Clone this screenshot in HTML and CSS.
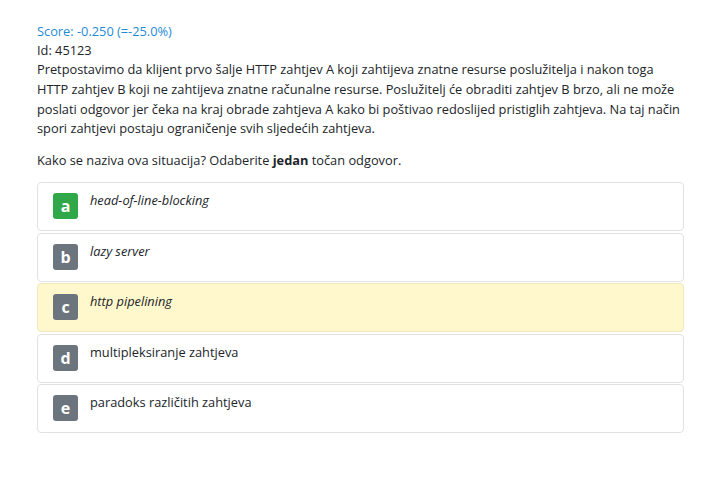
FILE: index.html
```html
<!DOCTYPE html>
<html lang="hr">
<head>
<meta charset="utf-8">
<link rel="stylesheet" href="styles.css">
</head>
<body>
<div class="question">
  <div class="score">Score: -0.250 (=-25.0%)</div>
  <div class="qid">Id: 45123</div>
  <p class="text">Pretpostavimo da klijent prvo šalje HTTP zahtjev A koji zahtijeva znatne resurse poslužitelja i nakon toga HTTP zahtjev B koji ne zahtijeva znatne računalne resurse. Poslužitelj će obraditi zahtjev B brzo, ali ne može poslati odgovor jer čeka na kraj obrade zahtjeva A kako bi poštivao redoslijed pristiglih zahtjeva. Na taj način spori zahtjevi postaju ograničenje svih sljedećih zahtjeva.</p>
  <p class="prompt">Kako se naziva ova situacija? Odaberite <b>jedan</b> točan odgovor.</p>
  <div class="answers">
    <div class="answer"><span class="badge correct">a</span><span class="label"><i>head-of-line-blocking</i></span></div>
    <div class="answer"><span class="badge">b</span><span class="label"><i>lazy server</i></span></div>
    <div class="answer selected"><span class="badge">c</span><span class="label"><i>http pipelining</i></span></div>
    <div class="answer"><span class="badge">d</span><span class="label">multipleksiranje zahtjeva</span></div>
    <div class="answer"><span class="badge">e</span><span class="label">paradoks različitih zahtjeva</span></div>
  </div>
</div>
</body>
</html>
```
FILE: styles.css
```css
html, body {
  margin: 0;
  padding: 0;
  background: #ffffff;
}
body {
  font-family: "Open Sans", "Noto Sans", sans-serif;
  font-size: 12.8px;
  color: #212529;
}
.question {
  padding: 21px 36px 0 37px;
}
.score {
  color: #1f8ad6;
  line-height: 20px;
}
.qid {
  line-height: 19px;
}
.text {
  margin: 0;
  line-height: 19.8px;
}
.prompt {
  margin: 11px 0 0;
  line-height: 20px;
}
.prompt b {
  font-weight: 700;
}
.answers {
  margin-top: 12px;
  display: flex;
  flex-direction: column;
  gap: 1.5px;
}
.answer {
  display: flex;
  align-items: flex-start;
  gap: 12px;
  height: 49px;
  box-sizing: border-box;
  padding: 10px 15px;
  border: 1px solid #e2e2e2;
  border-radius: 4px;
  background: #ffffff;
}
.answer.selected {
  background: #fff8cc;
  border-color: #efe7bd;
}
.badge {
  flex: none;
  width: 25px;
  height: 26px;
  border-radius: 3px;
  background: #6c757d;
  color: #ffffff;
  font-weight: 700;
  font-size: 16px;
  display: flex;
  align-items: center;
  justify-content: center;
  line-height: 1;
}
.badge.correct {
  background: #30a84a;
}
.label {
  line-height: 14px;
}
```
